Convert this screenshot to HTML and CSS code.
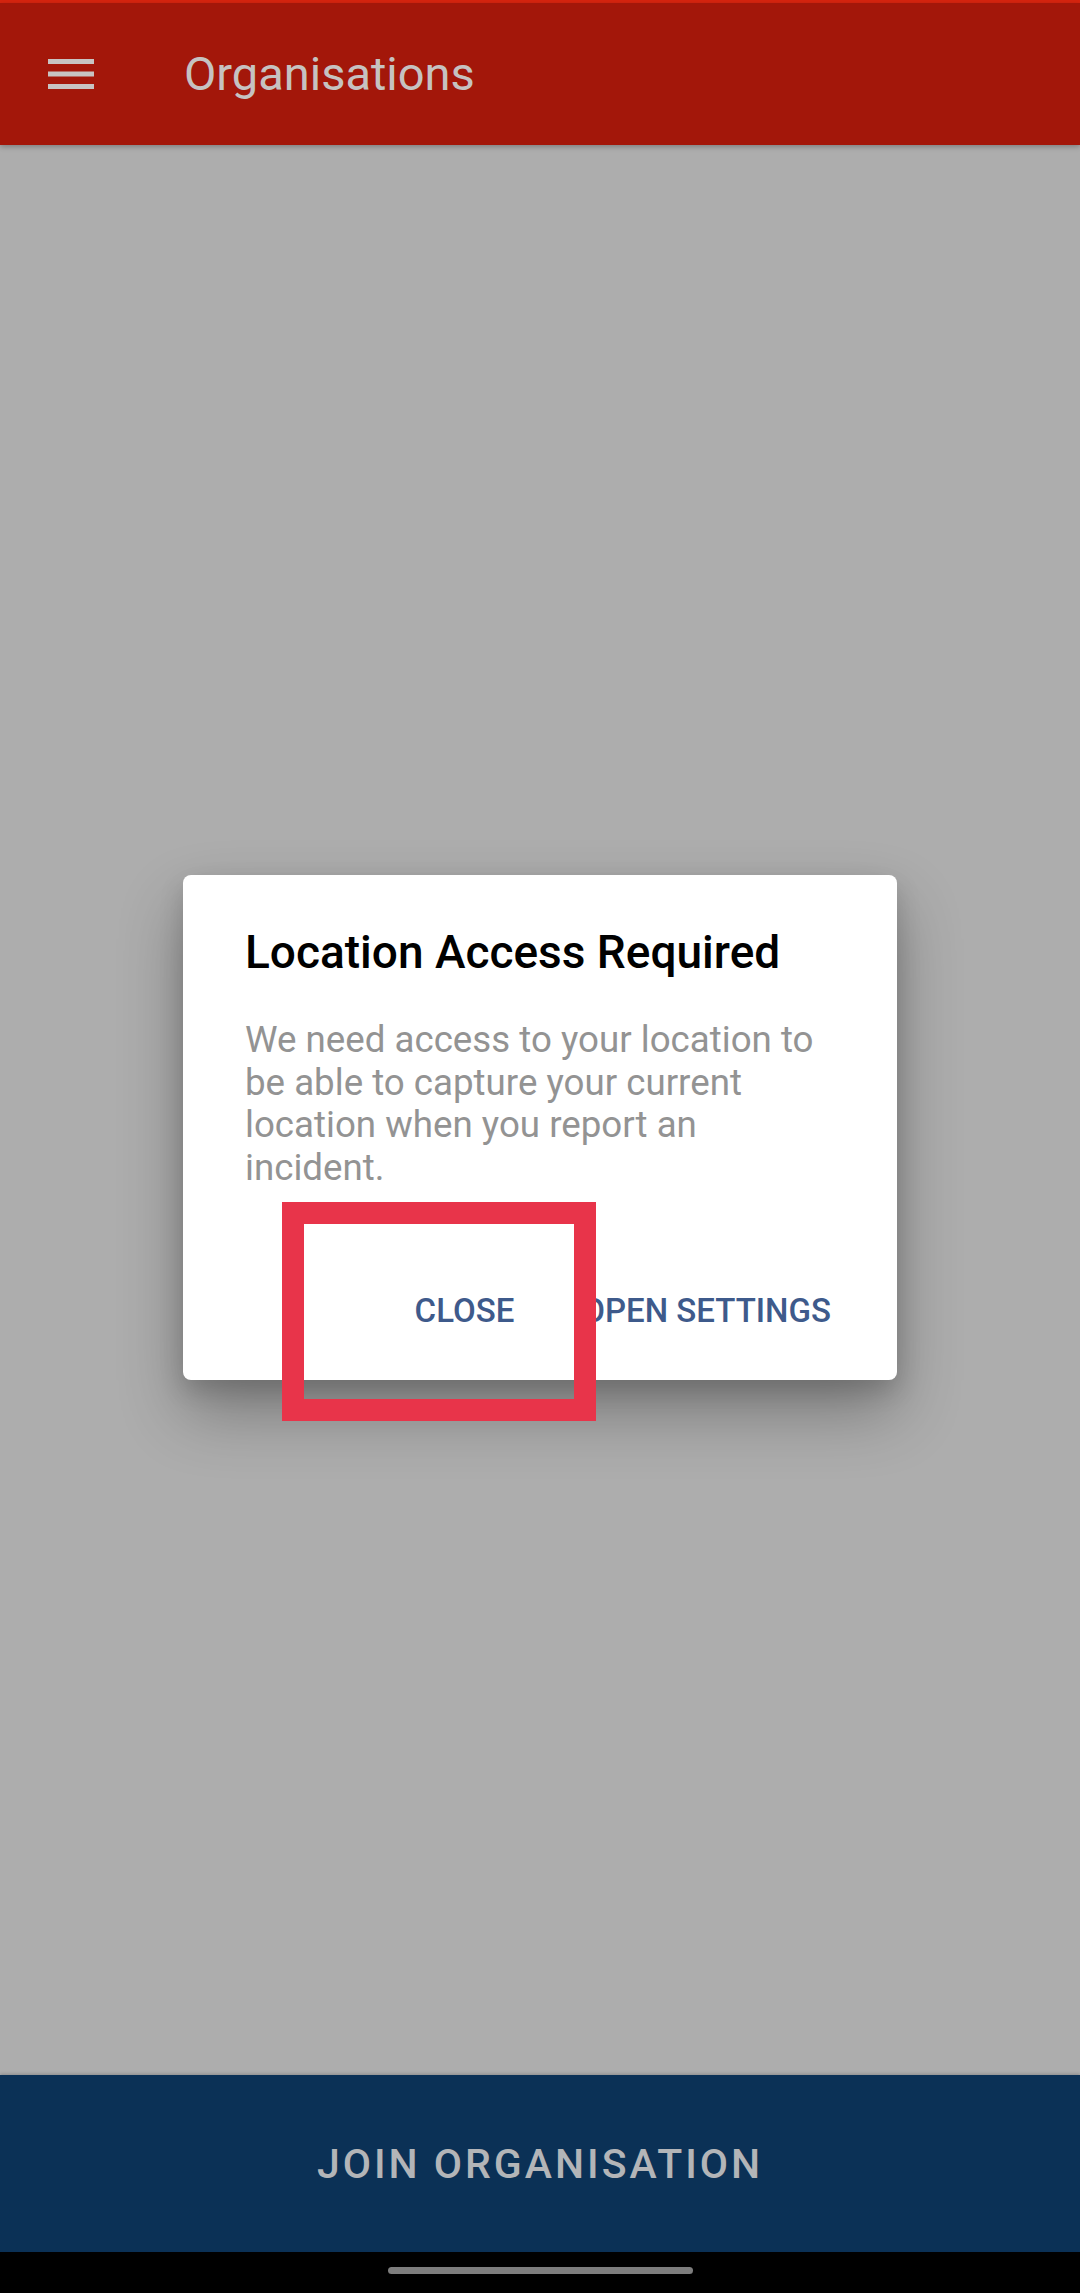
FILE: index.html
```html
<!DOCTYPE html>
<html lang="en">
<head>
    <meta charset="UTF-8">
    <meta name="viewport" content="width=device-width, initial-scale=1.0">
    <title>Organisations</title>
    <link rel="stylesheet" href="styles.css">
</head>
<body>
    <div class="screen">
        <div class="status-line"></div>
        <header class="toolbar">
            <svg class="menu-icon" width="46" height="30" viewBox="0 0 46 30">
                <rect x="0" y="0" width="46" height="5"></rect>
                <rect x="0" y="12.5" width="46" height="5"></rect>
                <rect x="0" y="25" width="46" height="5"></rect>
            </svg>
            <h1 class="toolbar-title">Organisations</h1>
        </header>

        <main class="content">
            <div class="dialog">
                <h2 class="dialog-title">Location Access Required</h2>
                <p class="dialog-text">We need access to your location to be able to capture your current location when you report an incident.</p>
                <div class="dialog-actions">
                    <button class="dialog-btn">CLOSE</button>
                    <button class="dialog-btn">OPEN SETTINGS</button>
                </div>
            </div>
        </main>

        <button class="join-btn">JOIN ORGANISATION</button>
        <div class="nav-bar"><span class="home-pill"></span></div>

        <div class="highlight"></div>
    </div>
</body>
</html>
```

FILE: styles.css
```css
body {
    margin: 0;
    font-family: Roboto, "Noto Sans", "Liberation Sans", sans-serif;
}
.screen {
    position: relative;
    width: 1080px;
    height: 2293px;
    display: flex;
    flex-direction: column;
    background-color: #adadad;
    overflow: hidden;
}
.status-line {
    height: 3px;
    background-color: #d6240f;
}
.toolbar {
    height: 142px;
    display: flex;
    align-items: center;
    padding-left: 48px;
    background-color: #a3170a;
    box-shadow: 0 2px 5px rgba(0, 0, 0, 0.25);
    position: relative;
    z-index: 1;
}
.menu-icon {
    fill: #c8c3c2;
    margin-right: 90px;
}
.toolbar-title {
    margin: 0;
    font-size: 47px;
    line-height: 54px;
    font-weight: 400;
    color: #c6c2c1;
}
.content {
    flex: 1;
    padding-top: 730px;
}
.dialog {
    width: 714px;
    height: 505px;
    box-sizing: border-box;
    margin: 0 auto;
    padding: 50px 0 0 62px;
    background: white;
    border-radius: 8px;
    box-shadow: 0 32px 64px rgba(0, 0, 0, 0.3), 0 10px 25px rgba(0, 0, 0, 0.15);
    display: flex;
    flex-direction: column;
}
.dialog-title {
    margin: 0;
    font-size: 46px;
    line-height: 54px;
    font-weight: 500;
    color: #000;
}
.dialog-text {
    margin: 40px 0 0;
    max-width: 592px;
    font-size: 36.7px;
    line-height: 42.5px;
    color: #939393;
}
.dialog-actions {
    margin-top: auto;
    margin-bottom: 21px;
    display: flex;
    justify-content: flex-end;
    gap: 26px;
    padding-right: 45px;
}
.dialog-btn {
    font-family: inherit;
    font-size: 33px;
    font-weight: 500;
    line-height: 96px;
    padding: 0 21px;
    color: #3e5a8b;
    background: none;
    border: none;
}
.join-btn {
    height: 177px;
    border: none;
    background-color: #0b3156;
    color: #b3b5b8;
    font-family: inherit;
    font-size: 41px;
    font-weight: 500;
    letter-spacing: 3px;
    box-shadow: 0 -1px 3px rgba(0, 0, 0, 0.2);
}
.nav-bar {
    height: 41px;
    background: #000;
    display: flex;
    justify-content: center;
    padding-top: 15px;
    box-sizing: border-box;
}
.home-pill {
    width: 305px;
    height: 7px;
    border-radius: 4px;
    background: #7d7d7d;
}
.highlight {
    position: absolute;
    left: 282px;
    top: 1202px;
    width: 314px;
    height: 219px;
    box-sizing: border-box;
    border: 22px solid #e8344a;
}
```
